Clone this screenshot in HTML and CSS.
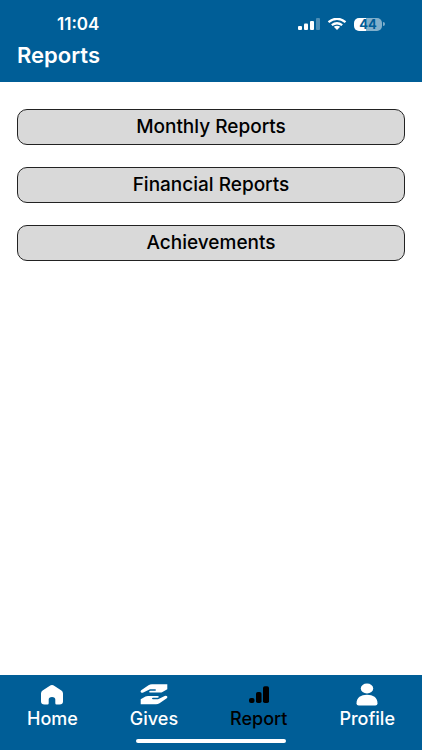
FILE: index.html
```html
<!DOCTYPE html>
<html lang="en">
<head>
<meta charset="utf-8">
<meta name="viewport" content="width=device-width, initial-scale=1">
<title>Reports</title>
<link rel="stylesheet" href="styles.css">
</head>
<body>
<header class="header">
  <div class="status">
    <time class="clock">11:04</time>
    <div class="indicators">
      <svg class="signal" viewBox="0 0 22 12" aria-hidden="true">
        <rect x="0" y="8" width="4" height="4" rx="1"/>
        <rect x="6" y="5.500" width="4" height="6.500" rx="1"/>
        <rect x="12" y="3" width="4" height="9" rx="1"/>
        <rect x="18" y="0" width="4" height="12" rx="1" opacity=".3"/>
      </svg>
      <svg class="wifi" viewBox="0 0 20 12" aria-hidden="true">
        <path d="M1.500 4.200Q10-2.600 18.500 4.200M4.800 7.200Q10 3.200 15.200 7.200" fill="none" stroke="currentColor" stroke-width="2.300"/>
        <path d="M6.800 8.700Q10 6.800 13.200 8.700L10 12Z"/>
      </svg>
      <div class="battery"><span class="level">44</span></div>
    </div>
  </div>
  <h1 class="title">Reports</h1>
</header>
<main class="content">
  <button class="report" type="button">Monthly Reports</button>
  <button class="report" type="button">Financial Reports</button>
  <button class="report" type="button">Achievements</button>
</main>
<footer class="footer">
  <nav class="tabs">
    <a class="tab" href="#home">
      <svg class="icon" viewBox="0 0 28 24" aria-hidden="true"><path d="M3 10.500Q3 8.800 4.600 7.600L11.500 2.900Q14 1.300 16.500 2.900L23.400 7.600Q25 8.800 25 10.500V18.500Q25 21.500 21.500 21.500H18.500Q17.300 21.500 17.300 20.300V16.500Q17.300 13.900 14 13.900T10.700 16.500V20.300Q10.700 21.500 9.500 21.500H6.500Q3 21.500 3 18.500Z"/></svg>
      <span>Home</span>
    </a>
    <a class="tab" href="#gives">
      <svg class="icon" viewBox="0 0 28 24" aria-hidden="true">
        <path d="M27.300 1.200V6.200L22.500 9Q21.600 9.600 20 9.600H10.500Q9.200 9.600 9.200 8.700T10.500 7.800H15Q16 7.800 16 7T15 6.200H10L3.300 9.600Q1.700 10.200 .900 9.200T1.200 7.300L8.500 2.300Q10 1.200 12 1.200Z"/>
        <path d="M.700 21.300V16.300L5.500 13.500Q6.400 12.900 8 12.900H17.500Q18.800 12.900 18.800 13.800T17.500 14.700H13Q12 14.700 12 15.500T13 16.300H18L24.700 12.900Q26.300 12.300 27.100 13.300T26.800 15.200L19.500 20.200Q18 21.300 16 21.300Z"/>
      </svg>
      <span>Gives</span>
    </a>
    <a class="tab active" href="#report" aria-current="page">
      <svg class="icon" viewBox="0 0 28 24" aria-hidden="true"><rect x="4" y="15" width="5.500" height="5" rx="2"/><rect x="11" y="9" width="5.500" height="11" rx="1.800"/><rect x="18" y="3.300" width="6" height="16.700" rx="1.800"/></svg>
      <span>Report</span>
    </a>
    <a class="tab" href="#profile">
      <svg class="icon" viewBox="0 0 28 24" aria-hidden="true"><ellipse cx="14" cy="5.500" rx="6.200" ry="5"/><path d="M3.500 20.500C3.500 14.500 8 11.800 14 11.800S24.500 14.500 24.500 20.500Q24.500 22.500 22.300 22.500H5.700Q3.500 22.500 3.500 20.500Z"/></svg>
      <span>Profile</span>
    </a>
  </nav>
  <div class="home-bar"></div>
</footer>
</body>
</html>
```
FILE: styles.css
```css
* {
  box-sizing: border-box;
}

body {
  margin: 0;
  min-height: 100vh;
  display: flex;
  flex-direction: column;
  background: #fff;
  color: #000;
  font-family: Inter, "Liberation Sans", sans-serif;
}

.header {
  padding: 14px 17px;
  background: #005e97;
  color: #fff;
}

.status {
  display: flex;
  align-items: center;
  justify-content: space-between;
  height: 20px;
  padding: 0 20px 0 40px;
}

.clock {
  font-size: 17px;
  line-height: 20px;
  font-weight: 600;
}

.indicators {
  display: flex;
  align-items: center;
  gap: 7px;
}

.signal,
.wifi {
  height: 12px;
  fill: currentColor;
}

.signal {
  width: 22px;
}

.wifi {
  width: 20px;
}

.battery {
  display: flex;
  align-items: center;
}

.battery::after {
  content: "";
  width: 2px;
  height: 4px;
  margin-left: 1px;
  border-radius: 0 2px 2px 0;
  background: #80afcb;
}

.level {
  width: 28px;
  border-radius: 5px;
  background: linear-gradient(90deg, #fff 44%, #80afcb 44%);
  color: #005e97;
  font-size: 13px;
  line-height: 13px;
  font-weight: 700;
  text-align: center;
}

.title {
  margin: 8px 0 0;
  font-size: 22px;
  line-height: 26px;
  font-weight: 600;
}

.content {
  flex: 1;
  display: flex;
  flex-direction: column;
  gap: 22px;
  padding: 27px 17px;
}

.report {
  height: 36px;
  padding: 0;
  border: 1px solid #222;
  border-radius: 10px;
  background: #d9d9d9;
  color: #000;
  font: 500 19px/24px Inter, "Liberation Sans", sans-serif;
}

.footer {
  padding: 8px 27px 7px;
  background: #005e97;
}

.tabs {
  display: flex;
  justify-content: space-between;
}

.tab {
  display: flex;
  flex-direction: column;
  align-items: center;
  color: #fff;
  font-size: 18px;
  line-height: 24px;
  font-weight: 500;
  text-decoration: none;
}

.active {
  color: #000;
}

.icon {
  width: 28px;
  height: 24px;
  fill: currentColor;
}

.home-bar {
  width: 36%;
  min-width: 150px;
  height: 4px;
  margin: 8px auto 0;
  border-radius: 2px;
  background: #fff;
}
```
